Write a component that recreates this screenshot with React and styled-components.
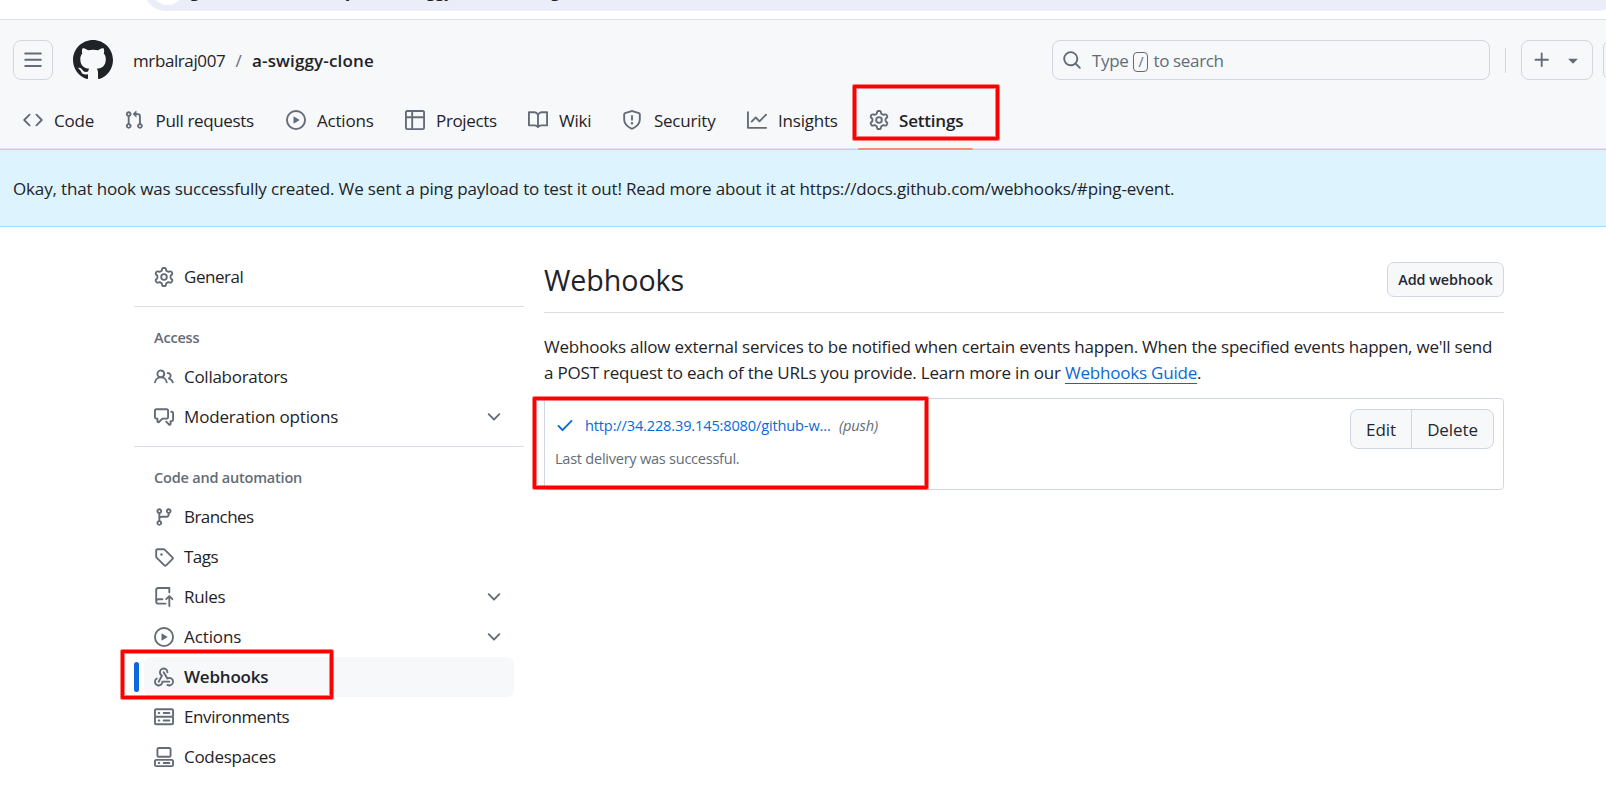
import React from "react";
import styled, { createGlobalStyle } from "styled-components";

const GlobalStyle = createGlobalStyle`
  * { box-sizing: border-box; }
  html, body { margin: 0; padding: 0; overflow: hidden; background: #ffffff; }
  body {
    font-family: "Open Sans", "Noto Sans", sans-serif;
    font-size: 17px;
    letter-spacing: -0.15px;
    color: #1f2328;
  }
`;

/* 16px-grid icon shapes */
const paths = {
  menu: "M1 2.75A.75.75 0 0 1 1.75 2h12.5a.75.75 0 0 1 0 1.5H1.75A.75.75 0 0 1 1 2.75Zm0 5A.75.75 0 0 1 1.75 7h12.5a.75.75 0 0 1 0 1.5H1.75A.75.75 0 0 1 1 7.75ZM1.75 12h12.5a.75.75 0 0 1 0 1.5H1.75a.75.75 0 0 1 0-1.5Z",
  github: "M8 0c4.42 0 8 3.58 8 8a8.013 8.013 0 0 1-5.45 7.59c-.4.08-.55-.17-.55-.38 0-.27.01-1.13.01-2.2 0-.75-.25-1.23-.54-1.48 1.78-.2 3.65-.88 3.65-3.95 0-.88-.31-1.59-.82-2.15.08-.2.36-1.02-.08-2.12 0 0-.67-.22-2.2.82-.64-.18-1.32-.27-2-.27-.68 0-1.36.09-2 .27-1.53-1.03-2.2-.82-2.2-.82-.44 1.1-.16 1.92-.08 2.12-.51.56-.82 1.28-.82 2.15 0 3.06 1.86 3.75 3.64 3.95-.23.2-.44.55-.51 1.07-.46.21-1.61.55-2.33-.66-.15-.24-.6-.83-1.23-.82-.67.01-.27.38.01.53.34.19.73.9.82 1.13.16.45.68 1.31 2.69.94 0 .67.01 1.3.01 1.49 0 .21-.15.45-.55.38A7.995 7.995 0 0 1 0 8c0-4.42 3.58-8 8-8Z",
  code: "m11.28 3.22 4.25 4.25a.75.75 0 0 1 0 1.06l-4.25 4.25a.749.749 0 0 1-1.275-.326.749.749 0 0 1 .215-.734L13.94 8l-3.72-3.72a.749.749 0 0 1 .326-1.275.749.749 0 0 1 .734.215Zm-6.56 0a.751.751 0 0 1 1.042.018.751.751 0 0 1 .018 1.042L2.06 8l3.72 3.72a.749.749 0 0 1-.326 1.275.749.749 0 0 1-.734-.215L.47 8.53a.75.75 0 0 1 0-1.06Z",
  pull: "M1.5 3.25a2.25 2.25 0 1 1 3 2.122v5.256a2.251 2.251 0 1 1-1.5 0V5.372A2.25 2.25 0 0 1 1.5 3.25Zm5.677-.177L9.573.677A.25.25 0 0 1 10 .854V2.5h1A2.5 2.5 0 0 1 13.5 5v5.628a2.251 2.251 0 1 1-1.5 0V5a1 1 0 0 0-1-1h-1v1.646a.25.25 0 0 1-.427.177L7.177 3.427a.25.25 0 0 1 0-.354ZM3.75 2.5a.75.75 0 1 0 0 1.5.75.75 0 0 0 0-1.5Zm0 9.5a.75.75 0 1 0 0 1.5.75.75 0 0 0 0-1.5Zm8.25.75a.75.75 0 1 0 1.5 0 .75.75 0 0 0-1.5 0Z",
  play: "M8 0a8 8 0 1 1 0 16A8 8 0 0 1 8 0ZM1.5 8a6.5 6.5 0 1 0 13 0 6.5 6.5 0 0 0-13 0Zm4.879-2.773 4.264 2.559a.25.25 0 0 1 0 .428l-4.264 2.559A.25.25 0 0 1 6 10.559V5.442a.25.25 0 0 1 .379-.215Z",
  table: "M0 1.75C0 .784.784 0 1.75 0h12.5C15.216 0 16 .784 16 1.75v12.5A1.75 1.75 0 0 1 14.25 16H1.75A1.75 1.75 0 0 1 0 14.25ZM6.5 6.5v8h7.75a.25.25 0 0 0 .25-.25V6.5Zm8-1.5V1.75a.25.25 0 0 0-.25-.25H6.5V5Zm-13 1.5v7.75c0 .138.112.25.25.25H5v-8ZM5 5V1.5H1.75a.25.25 0 0 0-.25.25V5Z",
  book: "M0 1.75A.75.75 0 0 1 .75 1h4.253c1.227 0 2.317.59 3 1.501A3.743 3.743 0 0 1 11.006 1h4.245a.75.75 0 0 1 .75.75v10.5a.75.75 0 0 1-.75.75h-4.507a2.25 2.25 0 0 0-1.591.659l-.622.621a.75.75 0 0 1-1.06 0l-.622-.621A2.25 2.25 0 0 0 5.258 13H.75a.75.75 0 0 1-.75-.75Zm7.251 10.324.004-5.073-.002-2.253A2.25 2.25 0 0 0 5.003 2.5H1.5v9h3.757a3.75 3.75 0 0 1 1.994.574ZM8.755 4.75l-.004 7.322a3.752 3.752 0 0 1 1.992-.572H14.5v-9h-3.495a2.25 2.25 0 0 0-2.25 2.25Z",
  shield: "M7.467.133a1.748 1.748 0 0 1 1.066 0l5.25 1.68A1.75 1.75 0 0 1 15 3.48V7c0 1.566-.32 3.182-1.303 4.682-.983 1.498-2.585 2.813-5.032 3.855a1.697 1.697 0 0 1-1.33 0c-2.447-1.042-4.049-2.357-5.032-3.855C1.32 10.182 1 8.566 1 7V3.48a1.75 1.75 0 0 1 1.217-1.667Zm.61 1.429a.25.25 0 0 0-.153 0l-5.25 1.68a.25.25 0 0 0-.174.238V7c0 1.358.275 2.666 1.057 3.86.784 1.194 2.121 2.34 4.366 3.297a.196.196 0 0 0 .154 0c2.245-.956 3.582-2.104 4.366-3.298C13.225 9.666 13.5 8.36 13.5 7V3.48a.251.251 0 0 0-.174-.237l-5.25-1.68ZM8.75 4.75v3a.75.75 0 0 1-1.5 0v-3a.75.75 0 0 1 1.5 0ZM9 10.5a1 1 0 1 1-2 0 1 1 0 0 1 2 0Z",
  graph: "M1.5 1.75V13.5h13.75a.75.75 0 0 1 0 1.5H.75a.75.75 0 0 1-.75-.75V1.75a.75.75 0 0 1 1.5 0Zm14.28 2.53-5.25 5.25a.75.75 0 0 1-1.06 0L7 7.06 4.28 9.78a.751.751 0 0 1-1.042-.018.751.751 0 0 1-.018-1.042l3.25-3.25a.75.75 0 0 1 1.06 0L10 7.94l4.72-4.72a.751.751 0 0 1 1.042.018.751.751 0 0 1 .018 1.042Z",
  gear: "M8 0a8.2 8.2 0 0 1 .701.031C9.444.095 9.99.645 10.16 1.29l.288 1.107c.018.066.079.158.212.224.231.114.454.243.668.386.123.082.233.09.299.071l1.103-.303c.644-.176 1.392.021 1.82.63.27.385.506.792.704 1.218.315.675.111 1.422-.364 1.891l-.814.806c-.049.048-.098.147-.088.294.016.257.016.515 0 .772-.01.147.038.246.088.294l.814.806c.475.469.679 1.216.364 1.891a7.977 7.977 0 0 1-.704 1.217c-.428.61-1.176.807-1.82.63l-1.102-.302c-.067-.019-.177-.011-.3.071a5.909 5.909 0 0 1-.668.386c-.133.066-.194.158-.211.224l-.29 1.106c-.168.646-.715 1.196-1.458 1.26a8.006 8.006 0 0 1-1.402 0c-.743-.064-1.289-.614-1.458-1.26l-.289-1.106c-.018-.066-.079-.158-.212-.224a5.738 5.738 0 0 1-.668-.386c-.123-.082-.233-.09-.299-.071l-1.103.303c-.644.176-1.392-.021-1.82-.63a8.12 8.12 0 0 1-.704-1.218c-.315-.675-.111-1.422.363-1.891l.815-.806c.05-.048.098-.147.088-.294a6.214 6.214 0 0 1 0-.772c.01-.147-.038-.246-.088-.294l-.815-.806C.635 6.045.431 5.298.746 4.623a7.92 7.92 0 0 1 .704-1.217c.428-.61 1.176-.807 1.82-.63l1.102.302c.067.019.177.011.3-.071.214-.143.437-.272.668-.386.133-.066.194-.158.211-.224l.29-1.106C6.009.645 6.556.095 7.299.03 7.53.01 7.764 0 8 0Zm-.571 1.525c-.036.003-.108.036-.137.146l-.289 1.105c-.147.561-.549.967-.998 1.189-.173.086-.34.183-.5.29-.417.278-.97.423-1.529.27l-1.103-.303c-.109-.03-.175.016-.195.045-.22.312-.412.644-.573.99-.014.031-.021.11.059.19l.815.806c.411.406.562.957.53 1.456a4.709 4.709 0 0 0 0 .582c.032.499-.119 1.05-.53 1.456l-.815.806c-.081.08-.073.159-.059.19.162.346.353.677.573.989.02.03.085.076.195.046l1.102-.303c.56-.153 1.113-.008 1.53.27.161.107.328.204.501.29.447.222.85.629.997 1.189l.289 1.105c.029.109.101.143.137.146a6.6 6.6 0 0 0 1.142 0c.036-.003.108-.036.137-.146l.289-1.105c.147-.561.549-.967.998-1.189.173-.086.34-.183.5-.29.417-.278.97-.423 1.529-.27l1.103.303c.109.029.175-.016.195-.045.22-.313.411-.644.573-.99.014-.031.021-.11-.059-.19l-.815-.806c-.411-.406-.562-.957-.53-1.456a4.709 4.709 0 0 0 0-.582c-.032-.499.119-1.05.53-1.456l.815-.806c.081-.08.073-.159.059-.19a6.464 6.464 0 0 0-.573-.989c-.02-.03-.085-.076-.195-.046l-1.102.303c-.56.153-1.113.008-1.53-.27a4.44 4.44 0 0 0-.501-.29c-.447-.222-.85-.629-.997-1.189l-.289-1.105c-.029-.11-.101-.143-.137-.146a6.6 6.6 0 0 0-1.142 0ZM11 8a3 3 0 1 1-6 0 3 3 0 0 1 6 0ZM9.5 8a1.5 1.5 0 1 0-3.001.001A1.5 1.5 0 0 0 9.5 8Z",
  search: "M10.68 11.74a6 6 0 0 1-7.922-8.982 6 6 0 0 1 8.982 7.922l3.04 3.04a.749.749 0 0 1-.326 1.275.749.749 0 0 1-.734-.215ZM11.5 7a4.499 4.499 0 1 0-8.997 0A4.499 4.499 0 0 0 11.5 7Z",
  plus: "M7.75 2a.75.75 0 0 1 .75.75V7h4.25a.75.75 0 0 1 0 1.5H8.5v4.25a.75.75 0 0 1-1.5 0V8.5H2.75a.75.75 0 0 1 0-1.5H7V2.75A.75.75 0 0 1 7.75 2Z",
  triangle: "m4.427 7.427 3.396 3.396a.25.25 0 0 0 .354 0l3.396-3.396A.25.25 0 0 0 11.396 7H4.604a.25.25 0 0 0-.177.427Z",
  people: "M2 5.5a3.5 3.5 0 1 1 5.898 2.549 5.508 5.508 0 0 1 3.034 4.084.75.75 0 1 1-1.482.235 4 4 0 0 0-7.9 0 .75.75 0 0 1-1.482-.236A5.507 5.507 0 0 1 3.102 8.05 3.493 3.493 0 0 1 2 5.5ZM11 4a3.001 3.001 0 0 1 2.22 5.018 5.01 5.01 0 0 1 2.56 3.012.749.749 0 0 1-.885.954.752.752 0 0 1-.549-.514 3.507 3.507 0 0 0-2.522-2.372.75.75 0 0 1-.574-.73v-.352a.75.75 0 0 1 .416-.672A1.5 1.5 0 0 0 11 5.5.75.75 0 0 1 11 4Zm-5.5-.5a2 2 0 1 0-.001 3.999A2 2 0 0 0 5.5 3.5Z",
  discussion: "M1.75 1h8.5c.966 0 1.75.784 1.75 1.75v5.5A1.75 1.75 0 0 1 10.25 10H7.061l-2.574 2.573A1.458 1.458 0 0 1 2 11.543V10h-.25A1.75 1.75 0 0 1 0 8.25v-5.5C0 1.784.784 1 1.75 1ZM1.5 2.75v5.5c0 .138.112.25.25.25h1a.75.75 0 0 1 .75.75v2.19l2.72-2.72a.749.749 0 0 1 .53-.22h3.5a.25.25 0 0 0 .25-.25v-5.5a.25.25 0 0 0-.25-.25h-8.5a.25.25 0 0 0-.25.25Zm13 2a.25.25 0 0 0-.25-.25h-.5a.75.75 0 0 1 0-1.5h.5c.966 0 1.75.784 1.75 1.75v5.5A1.75 1.75 0 0 1 14.25 12H14v1.543a1.458 1.458 0 0 1-2.487 1.03L9.22 12.28a.749.749 0 0 1 .326-1.275.749.749 0 0 1 .734.215l2.22 2.22v-2.19a.75.75 0 0 1 .75-.75h1a.25.25 0 0 0 .25-.25Z",
  chevron: "M12.78 5.22a.749.749 0 0 1 0 1.06l-4.25 4.25a.749.749 0 0 1-1.06 0L3.22 6.28a.749.749 0 1 1 1.06-1.06L8 8.939l3.72-3.719a.749.749 0 0 1 1.06 0Z",
  branch: "M9.5 3.25a2.25 2.25 0 1 1 3 2.122V6A2.5 2.5 0 0 1 10 8.5H6a1 1 0 0 0-1 1v1.128a2.251 2.251 0 1 1-1.5 0V5.372a2.25 2.25 0 1 1 1.5 0v1.836A2.493 2.493 0 0 1 6 7h4a1 1 0 0 0 1-1v-.628A2.25 2.25 0 0 1 9.5 3.25Zm-6 0a.75.75 0 1 0 1.5 0 .75.75 0 0 0-1.5 0Zm8.25-.75a.75.75 0 1 0 0 1.5.75.75 0 0 0 0-1.5ZM4.25 12a.75.75 0 1 0 0 1.5.75.75 0 0 0 0-1.5Z",
  tag: "M1 7.775V2.75C1 1.784 1.784 1 2.75 1h5.025c.464 0 .91.184 1.238.513l6.25 6.25a1.75 1.75 0 0 1 0 2.474l-5.026 5.026a1.75 1.75 0 0 1-2.474 0l-6.25-6.25A1.752 1.752 0 0 1 1 7.775Zm1.5 0c0 .066.026.13.073.177l6.25 6.25a.25.25 0 0 0 .354 0l5.025-5.025a.25.25 0 0 0 0-.354l-6.25-6.25a.25.25 0 0 0-.177-.073H2.75a.25.25 0 0 0-.25.25ZM6 5a1 1 0 1 1 0 2 1 1 0 0 1 0-2Z",
  push: "M1 2.5A2.5 2.5 0 0 1 3.5 0h8.75a.75.75 0 0 1 .75.75v3.5a.75.75 0 0 1-1.5 0V1.5h-8a1 1 0 0 0-1 1v6.708A2.493 2.493 0 0 1 3.5 9h3.25a.75.75 0 0 1 0 1.5H3.5a1 1 0 0 0 0 2h5.75a.75.75 0 0 1 0 1.5H3.5A2.5 2.5 0 0 1 1 11.5Zm13.23 7.79h-.001l-1.224-1.224v6.184a.75.75 0 0 1-1.5 0V9.066L10.28 10.29a.75.75 0 0 1-1.06-1.061l2.505-2.504a.75.75 0 0 1 1.06 0L15.29 9.23a.751.751 0 0 1-.018 1.042.751.751 0 0 1-1.042.018Z",
  webhook: "M5.5 4.25a2.25 2.25 0 0 1 4.5 0 .75.75 0 0 0 1.5 0 3.75 3.75 0 1 0-6.14 2.889l-2.272 4.258a.75.75 0 0 0 1.324.706L7 7.25a.75.75 0 0 0-.309-1.015A2.25 2.25 0 0 1 5.5 4.25ZM7.364 3.607a.75.75 0 0 1 1.03.257l2.608 4.349a3.75 3.75 0 1 1-.628 6.785.75.75 0 0 1 .752-1.299 2.25 2.25 0 1 0-.033-3.88.75.75 0 0 1-1.03-.256L7.107 4.636a.75.75 0 0 1 .257-1.03ZM2.9 8.776A.75.75 0 0 1 2.625 9.8 2.25 2.25 0 1 0 6 11.75a.75.75 0 0 1 .75-.751h5.5a.75.75 0 0 1 0 1.5H7.425a3.751 3.751 0 1 1-5.55-3.998.75.75 0 0 1 1.024.274Z",
  server: "M1.75 1h12.5c.966 0 1.75.784 1.75 1.75v4c0 .372-.116.717-.314 1 .198.283.314.628.314 1v4a1.75 1.75 0 0 1-1.75 1.75H1.75A1.75 1.75 0 0 1 0 12.75v-4c0-.358.109-.707.314-1a1.739 1.739 0 0 1-.314-1v-4C0 1.784.784 1 1.75 1ZM1.5 2.75v4c0 .138.112.25.25.25h12.5a.25.25 0 0 0 .25-.25v-4a.25.25 0 0 0-.25-.25H1.75a.25.25 0 0 0-.25.25Zm.25 5.75a.25.25 0 0 0-.25.25v4c0 .138.112.25.25.25h12.5a.25.25 0 0 0 .25-.25v-4a.25.25 0 0 0-.25-.25ZM7 4.75A.75.75 0 0 1 7.75 4h4.5a.75.75 0 0 1 0 1.5h-4.5A.75.75 0 0 1 7 4.75ZM7.75 10h4.5a.75.75 0 0 1 0 1.5h-4.5a.75.75 0 0 1 0-1.5ZM3 4.75A.75.75 0 0 1 3.75 4h.5a.75.75 0 0 1 0 1.5h-.5A.75.75 0 0 1 3 4.75ZM3.75 10h.5a.75.75 0 0 1 0 1.5h-.5a.75.75 0 0 1 0-1.5Z",
  codespaces: "M0 11.25c0-.966.784-1.75 1.75-1.75h12.5c.966 0 1.75.784 1.75 1.75v3A1.75 1.75 0 0 1 14.25 16H1.75A1.75 1.75 0 0 1 0 14.25Zm2-9.5C2 .784 2.784 0 3.75 0h8.5C13.216 0 14 .784 14 1.75v5a1.75 1.75 0 0 1-1.75 1.75h-8.5A1.75 1.75 0 0 1 2 6.75Zm1.75-.25a.25.25 0 0 0-.25.25v5c0 .138.112.25.25.25h8.5a.25.25 0 0 0 .25-.25v-5a.25.25 0 0 0-.25-.25Zm-2 9.5a.25.25 0 0 0-.25.25v3c0 .138.112.25.25.25h12.5a.25.25 0 0 0 .25-.25v-3a.25.25 0 0 0-.25-.25ZM7 12.75a.75.75 0 0 1 .75-.75h4.5a.75.75 0 0 1 0 1.5h-4.5a.75.75 0 0 1-.75-.75Zm-4 0a.75.75 0 0 1 .75-.75h.5a.75.75 0 0 1 0 1.5h-.5a.75.75 0 0 1-.75-.75Z",
  check: "M13.78 4.22a.75.75 0 0 1 0 1.06l-7.25 7.25a.75.75 0 0 1-1.06 0L2.22 9.28a.751.751 0 0 1 .018-1.042.751.751 0 0 1 1.042-.018L6 10.94l6.72-6.72a.75.75 0 0 1 1.06 0Z",
};

const Svg = styled.svg`
  display: block;
  flex: none;
  width: ${(p) => p.$size}px;
  height: ${(p) => p.$size}px;
  fill: ${(p) => p.$color};
`;

const Icon = ({ name, size = 20, color = "#636c76" }) => (
  <Svg viewBox="0 0 16 16" $size={size} $color={color} aria-hidden="true">
    <path d={paths[name]} />
  </Svg>
);

const Page = styled.div`
  width: 1606px;
  height: 786px;
  position: relative;
  overflow: hidden;
  display: flex;
  flex-direction: column;
`;

const BrowserBar = styled.div`
  flex: none;
  height: 20px;
  padding: 0 0 8px 144px;
  border-bottom: 1px solid #dfdfdf;
  display: flex;
  align-items: flex-end;
  overflow: hidden;
`;

const AddressPill = styled.div`
  flex: none;
  width: 1475px;
  height: 43px;
  padding: 0 8px 6px;
  border-radius: 22px;
  background: #ebedf8;
  display: flex;
  align-items: flex-end;
  gap: 7px;
`;

const SiteButton = styled.div`
  width: 31px;
  height: 31px;
  border-radius: 50%;
  background: #ffffff;
`;

const Address = styled.span`
  padding-bottom: 2px;
  font-size: 17px;
  line-height: 24px;
  letter-spacing: -0.1px;
  white-space: nowrap;
`;

const Header = styled.header`
  flex: none;
  height: 129px;
  background: #f6f8fa;
  border-bottom: 1px solid #e0e4e8;
  display: flex;
  flex-direction: column;
`;

const TopRow = styled.div`
  display: flex;
  align-items: center;
  height: 40px;
  margin: 20px 0;
  padding-left: 13px;
`;

const MenuButton = styled.button`
  width: 40px;
  height: 40px;
  padding: 0;
  border: 1px solid #d0d7de;
  border-radius: 8px;
  background: transparent;
  display: flex;
  align-items: center;
  justify-content: center;
`;

const Logo = styled.div`
  margin: 0 20px;
`;

const Breadcrumb = styled.div`
  flex: 1;
  display: flex;
  align-items: center;
  padding-top: 2px;
  line-height: 26px;
`;

const Owner = styled.span`
  width: 92px;
  letter-spacing: -0.4px;
`;

const Slash = styled.span`
  width: 27px;
  text-align: center;
  color: #636c76;
`;

const Repo = styled.span`
  font-weight: 600;
  letter-spacing: 0.15px;
`;

const SearchField = styled.div`
  flex: none;
  width: 438px;
  height: 40px;
  padding-left: 9px;
  border: 1px solid #d0d7de;
  border-radius: 8px;
  display: flex;
  align-items: center;
  color: #636c76;
`;

const SearchHint = styled.span`
  display: flex;
  align-items: center;
  gap: 5px;
  margin-left: 10px;
  padding-top: 2px;
  line-height: 26px;
  letter-spacing: -0.35px;
`;

const Key = styled.kbd`
  width: 15px;
  height: 20px;
  margin-top: 1px;
  border: 1px solid #636c76;
  border-radius: 4px;
  font: 14px/17px "Open Sans", sans-serif;
  text-align: center;
`;

const Divider = styled.div`
  flex: none;
  width: 1px;
  height: 25px;
  margin: 0 15px;
  background: #d0d7de;
`;

const CreateButton = styled.button`
  flex: none;
  width: 72px;
  height: 40px;
  padding: 0 9px 0 10px;
  border: 1px solid #d0d7de;
  border-radius: 8px;
  background: transparent;
  display: flex;
  align-items: center;
  justify-content: space-between;
`;

const ClippedButton = styled(MenuButton)`
  flex: none;
  margin-left: 10px;
`;

const TopActions = styled.div`
  flex: none;
  width: 554px;
  display: flex;
  align-items: center;
`;

const Tabs = styled.nav`
  display: flex;
  gap: 10px;
  padding-left: 13px;
`;

const Tab = styled.a`
  position: relative;
  display: flex;
  align-items: center;
  gap: 10px;
  height: 40px;
  padding: 0 10px;
  font-weight: ${(p) => (p.$active ? 600 : 400)};

  &::after {
    content: "";
    display: ${(p) => (p.$active ? "block" : "none")};
    position: absolute;
    left: -1px;
    right: 0;
    bottom: -10px;
    height: 2.5px;
    border-radius: 2px;
    background: #fd8c73;
  }
`;

const TabLabel = styled.span`
  width: ${(p) => p.$width}px;
  padding: 2px 0 0 ${(p) => p.$indent ?? 1}px;
  line-height: 26px;
  white-space: nowrap;
  letter-spacing: ${(p) => p.$track ?? -0.2}px;
`;

const Flash = styled.div`
  flex: none;
  height: 78px;
  padding: 2px 13px 0;
  border-top: 1px solid #a9dafc;
  border-bottom: 1px solid #a9dafc;
  background: #ddf4ff;
  display: flex;
  align-items: center;
  line-height: 26px;
`;

const Content = styled.div`
  display: flex;
  gap: 20px;
  padding: 30px 0 0 134px;
`;

const Sidebar = styled.aside`
  width: 390px;
  display: flex;
  flex-direction: column;
`;

const Section = styled.div`
  padding-bottom: 9px;

  & + & {
    border-top: 1px solid #d8dee4;
  }
`;

const SectionTitle = styled.div`
  height: 50px;
  padding: 10.5px 20px 0;
  font-size: 14.5px;
  font-weight: 600;
  line-height: 39px;
  letter-spacing: -0.2px;
  color: #636c76;
`;

const SideItem = styled.a`
  position: relative;
  display: flex;
  align-items: center;
  gap: 10px;
  height: 40px;
  margin: 0 10px;
  padding: 0 10px;
  border-radius: 8px;
  background: ${(p) => (p.$active ? "#f6f8fa" : "transparent")};
  font-weight: ${(p) => (p.$active ? 600 : 400)};

  &::before {
    content: "";
    display: ${(p) => (p.$active ? "block" : "none")};
    position: absolute;
    left: -10px;
    top: 5px;
    width: 5px;
    height: 30px;
    border-radius: 3px;
    background: #0969da;
  }
`;

const SideLabel = styled.span`
  flex: 1;
  line-height: 26px;
  letter-spacing: ${(p) => p.$track ?? -0.2}px;
`;

const Main = styled.main`
  width: 960px;
`;

const TitleRow = styled.div`
  height: 56px;
  padding: 5px 0 15px;
  border-bottom: 1px solid #d8dee4;
  display: flex;
  align-items: center;
  justify-content: space-between;
`;

const Title = styled.h2`
  margin: 0;
  font-size: 28.6px;
  font-weight: 400;
  line-height: 35px;
  letter-spacing: -0.05px;
`;

const AddButton = styled.button`
  width: 117px;
  height: 35px;
  padding: 0;
  border: 1px solid #d0d7de;
  border-radius: 7px;
  background: #f6f8fa;
  color: #24292f;
  font: 600 14.4px "Open Sans", sans-serif;
  letter-spacing: -0.05px;
`;

const Intro = styled.p`
  margin: 0;
  padding: 21px 0 11px;
  line-height: 26.25px;
  letter-spacing: -0.22px;
  white-space: nowrap;
`;

const IntroLine = styled.span`
  display: block;
  letter-spacing: ${(p) => p.$track}px;
`;

const GuideLink = styled.a`
  color: #0969da;
  text-decoration: underline;
  text-decoration-thickness: 1px;
  text-underline-offset: 4px;
  text-decoration-skip-ink: none;
`;

const HookBox = styled.div`
  height: 92px;
  padding: 10px 9px 10px 10px;
  border: 1px solid #d0d7de;
  border-radius: 4px;
  display: flex;
  justify-content: space-between;
  align-items: flex-start;
`;

const HookInfo = styled.div`
  display: flex;
  flex-direction: column;
  font-size: 14.6px;
`;

const HookLine = styled.div`
  display: flex;
  align-items: center;
  height: 32px;
`;

const HookUrl = styled.a`
  width: 246px;
  margin-left: 10px;
  color: #0969da;
  letter-spacing: -0.16px;
  white-space: nowrap;
`;

const HookEvent = styled.em`
  margin-left: 8px;
  color: #636c76;
`;

const HookStatus = styled.div`
  line-height: 34px;
  letter-spacing: -0.27px;
  color: #636c76;
`;

const ButtonGroup = styled.div`
  display: flex;
  height: 40px;
  border: 1px solid #d0d7de;
  border-radius: 8px;
  background: #f6f8fa;
`;

const GroupButton = styled.button`
  width: ${(p) => p.$width}px;
  padding: 2px 0 0;
  border: 0;
  background: transparent;
  color: #24292f;
  font: 500 17px "Open Sans", sans-serif;
  letter-spacing: -0.1px;

  & + & {
    border-left: 1px solid #d0d7de;
  }
`;

/* Hand-placed highlight frames over the page */
const Highlight = styled.div`
  position: absolute;
  left: ${(p) => p.$x}px;
  top: ${(p) => p.$y}px;
  width: ${(p) => p.$w}px;
  height: ${(p) => p.$h}px;
  border: 3px solid #ff0000;
  border-radius: 1px;
  box-shadow: 0 0 0 1px rgba(255, 0, 0, 0.5), inset 0 0 0 1px rgba(255, 0, 0, 0.5);
`;

const tabs = [
  { icon: "code", label: "Code", width: 41 },
  { icon: "pull", label: "Pull requests", width: 102, indent: 1.5, track: -0.35 },
  { icon: "play", label: "Actions", width: 59 },
  { icon: "table", label: "Projects", width: 63, track: -0.35 },
  { icon: "book", label: "Wiki", width: 34.4 },
  { icon: "shield", label: "Security", width: 64.6, indent: 1.5 },
  { icon: "graph", label: "Insights", width: 62 },
  { icon: "gear", label: "Settings", width: 64, indent: 0, active: true },
];

const sections = [
  { items: [{ icon: "gear", label: "General", track: -0.45 }] },
  {
    title: "Access",
    items: [
      { icon: "people", label: "Collaborators", track: -0.28 },
      { icon: "discussion", label: "Moderation options", track: -0.16, expandable: true },
    ],
  },
  {
    title: "Code and automation",
    items: [
      { icon: "branch", label: "Branches", track: -0.55 },
      { icon: "tag", label: "Tags", track: -0.5 },
      { icon: "push", label: "Rules", track: -0.3, expandable: true },
      { icon: "play", label: "Actions", track: -0.1, expandable: true },
      { icon: "webhook", label: "Webhooks", active: true },
      { icon: "server", label: "Environments", track: -0.4 },
      { icon: "codespaces", label: "Codespaces", track: -0.28 },
    ],
  },
];

export default function App() {
  return (
    <Page>
      <GlobalStyle />
      <BrowserBar>
        <AddressPill>
          <SiteButton />
          <Address>github.com/mrbalraj007/a-swiggy-clone/settings/hooks</Address>
        </AddressPill>
      </BrowserBar>

      <Header>
        <TopRow>
          <MenuButton aria-label="Menu">
            <Icon name="menu" />
          </MenuButton>
          <Logo>
            <Icon name="github" size={40} color="#1f2328" />
          </Logo>
          <Breadcrumb>
            <Owner>mrbalraj007</Owner>
            <Slash>/</Slash>
            <Repo>a-swiggy-clone</Repo>
          </Breadcrumb>
          <TopActions>
            <SearchField>
              <Icon name="search" />
              <SearchHint>
                Type <Key>/</Key> to search
              </SearchHint>
            </SearchField>
            <Divider />
            <CreateButton aria-label="Create new">
              <Icon name="plus" />
              <Icon name="triangle" />
            </CreateButton>
            <ClippedButton aria-label="Issues" />
          </TopActions>
        </TopRow>
        <Tabs>
          {tabs.map((t) => (
            <Tab key={t.label} $active={t.active}>
              <Icon name={t.icon} />
              <TabLabel $width={t.width} $indent={t.indent} $track={t.track}>
                {t.label}
              </TabLabel>
            </Tab>
          ))}
        </Tabs>
      </Header>

      <Flash>
        Okay, that hook was successfully created. We sent a ping payload to test it out! Read more about it at
        https://docs.github.com/webhooks/#ping-event.
      </Flash>

      <Content>
        <Sidebar>
          {sections.map((s, i) => (
            <Section key={i}>
              {s.title && <SectionTitle>{s.title}</SectionTitle>}
              {s.items.map((it) => (
                <SideItem key={it.label} $active={it.active}>
                  <Icon name={it.icon} />
                  <SideLabel $track={it.track}>{it.label}</SideLabel>
                  {it.expandable && <Icon name="chevron" />}
                </SideItem>
              ))}
            </Section>
          ))}
        </Sidebar>

        <Main>
          <TitleRow>
            <Title>Webhooks</Title>
            <AddButton>Add webhook</AddButton>
          </TitleRow>
          <Intro>
            <IntroLine $track={-0.22}>
              Webhooks allow external services to be notified when certain events happen. When the specified events
              happen, we'll send
            </IntroLine>
            <IntroLine $track={-0.2}>
              a POST request to each of the URLs you provide. Learn more in our{" "}
              <GuideLink>Webhooks Guide</GuideLink>.
            </IntroLine>
          </Intro>
          <HookBox>
            <HookInfo>
              <HookLine>
                <Icon name="check" color="#0969da" />
                <HookUrl>http://34.228.39.145:8080/github-w...</HookUrl>
                <HookEvent>(push)</HookEvent>
              </HookLine>
              <HookStatus>Last delivery was successful.</HookStatus>
            </HookInfo>
            <ButtonGroup>
              <GroupButton $width={60}>Edit</GroupButton>
              <GroupButton $width={82}>Delete</GroupButton>
            </ButtonGroup>
          </HookBox>
        </Main>
      </Content>

      <Highlight $x={853} $y={85} $w={146} $h={55} />
      <Highlight $x={121} $y={650} $w={212} $h={49} />
      <Highlight $x={533} $y={397} $w={395} $h={92} />
    </Page>
  );
}
